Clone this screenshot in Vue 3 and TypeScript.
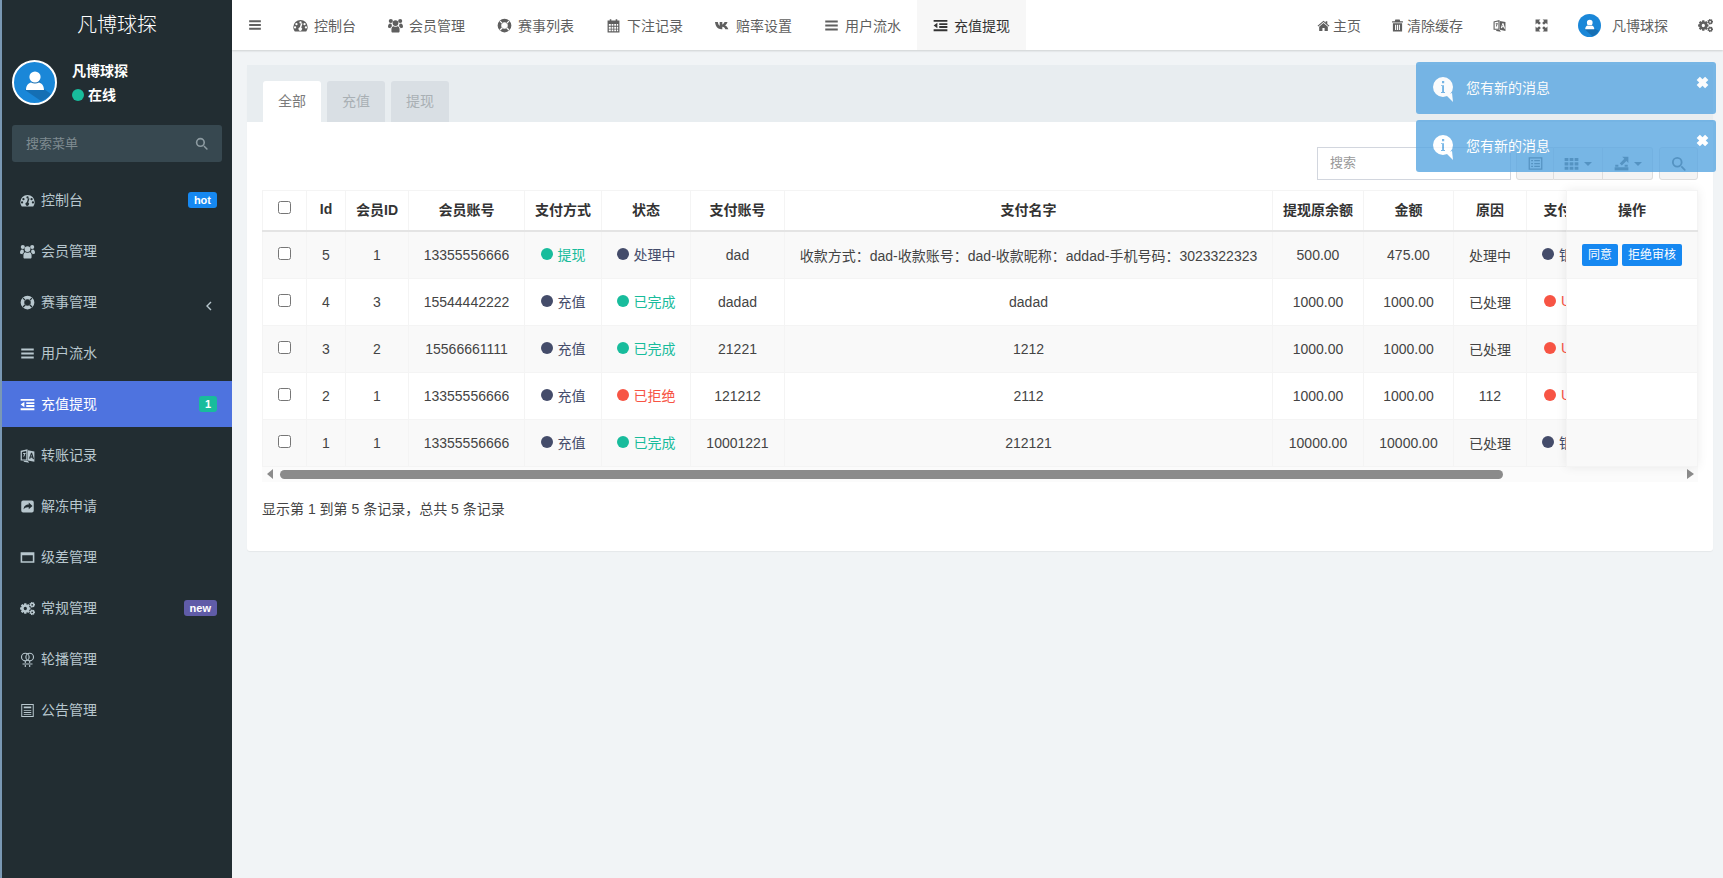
<template>
  <div class="layout">
    <!-- Sidebar -->
    <aside class="sidebar">
      <div class="logo">凡博球探</div>
      <div class="user-panel">
        <svg class="avatar" viewBox="0 0 45 45">
          <circle cx="22.5" cy="22.5" r="21.5" fill="#1a87d8" stroke="#fff" stroke-width="2" />
          <path d="M13 30 L25 16 L32 29 L39 34 A19.5 19.5 0 0 1 29 41 Z" fill="#135f9c" opacity="0.6" />
          <circle cx="23" cy="17" r="5.6" fill="#fff" />
          <path d="M14 30c0-5 3-7 5-7.5 2.4 1.4 5.6 1.4 8 0 2 .5 5 2.5 5 7.5z" fill="#fff" />
        </svg>
        <div class="user-info">
          <div class="user-name">凡博球探</div>
          <div class="user-status"><i class="dot green"></i>在线</div>
        </div>
      </div>
      <div class="side-search">
        <input type="text" placeholder="搜索菜单">
        <svg class="ico" viewBox="0 0 24 24"><path v-for="d in icons.search" :key="d" :d="d" /></svg>
      </div>
      <nav class="menu">
        <a v-for="item in menu" :key="item.label" class="menu-item" :class="{ active: item.active }">
          <svg class="ico" viewBox="0 0 24 24"><path v-for="d in icons[item.icon]" :key="d" :d="d" /></svg>
          <span class="menu-label">{{ item.label }}</span>
          <span v-if="item.badge" class="badge" :class="item.badgeClass">{{ item.badge }}</span>
          <svg v-if="item.arrow" class="chevron" viewBox="0 0 6 10"><path d="M5 1 1 5l4 4" /></svg>
        </a>
      </nav>
    </aside>

    <div class="main">
      <!-- Top bar -->
      <header class="topbar">
        <a class="toggle">
          <svg class="ico" viewBox="0 0 24 24"><path v-for="d in icons.bars" :key="d" :d="d" /></svg>
        </a>
        <a v-for="tab in navTabs" :key="tab.label" class="nav-tab" :class="{ active: tab.active }">
          <svg class="ico" viewBox="0 0 24 24"><path v-for="d in icons[tab.icon]" :key="d" :d="d" /></svg>
          {{ tab.label }}
        </a>
        <div class="top-right">
          <a class="top-link">
            <svg class="ico" viewBox="0 0 24 24"><path v-for="d in icons.home" :key="d" :d="d" /></svg>
            主页
          </a>
          <a class="top-link">
            <svg class="ico" viewBox="0 0 24 24"><path v-for="d in icons.trash" :key="d" :d="d" /></svg>
            清除缓存
          </a>
          <a class="top-link lang">
            <svg class="ico" viewBox="0 0 24 24"><path v-for="d in icons.language" :key="d" :d="d" /></svg>
          </a>
          <a class="top-link">
            <svg class="ico" viewBox="0 0 24 24"><path v-for="d in icons.expand" :key="d" :d="d" /></svg>
          </a>
          <a class="top-link user-link">
            <svg class="avatar-sm" viewBox="0 0 45 45">
              <circle cx="22.5" cy="22.5" r="22.5" fill="#1a87d8" />
              <path d="M13 30 L25 16 L32 29 L41 33 A22 22 0 0 1 29 44 Z" fill="#135f9c" opacity="0.6" />
              <circle cx="23" cy="17" r="5.6" fill="#fff" />
              <path d="M14 30c0-5 3-7 5-7.5 2.4 1.4 5.6 1.4 8 0 2 .5 5 2.5 5 7.5z" fill="#fff" />
            </svg>
            凡博球探
          </a>
          <a class="top-link last">
            <svg class="ico" viewBox="0 0 24 24"><path v-for="d in icons.cogs" :key="d" :d="d" /></svg>
          </a>
        </div>
      </header>

      <!-- Content -->
      <section class="content">
        <div class="panel">
          <div class="panel-heading">
            <a v-for="(tab, i) in panelTabs" :key="tab" class="panel-tab" :class="{ active: i === 0 }">{{ tab }}</a>
          </div>
          <div class="panel-body">
            <div class="toolbar">
              <input class="table-search" type="text" placeholder="搜索">
              <div class="btn-group">
                <button class="tool-btn first">
                  <svg class="ico" viewBox="0 0 24 24"><path v-for="d in icons.listAlt" :key="d" :d="d" /></svg>
                </button>
                <button class="tool-btn mid wide">
                  <svg class="ico" viewBox="0 0 24 24"><path v-for="d in icons.grid" :key="d" :d="d" /></svg>
                  <i class="caret"></i>
                </button>
                <button class="tool-btn last-btn wide">
                  <svg class="ico" viewBox="0 0 24 24"><path v-for="d in icons.exportTo" :key="d" :d="d" /></svg>
                  <i class="caret"></i>
                </button>
              </div>
              <button class="tool-btn single">
                <svg class="ico" viewBox="0 0 24 24"><path v-for="d in icons.search" :key="d" :d="d" /></svg>
              </button>
            </div>

            <div class="table-wrap">
              <div class="table-scroll">
                <table class="data-table" :style="{ width: tableWidth + 'px' }">
                  <colgroup>
                    <col v-for="(w, i) in colWidths" :key="i" :style="{ width: w + 'px' }">
                  </colgroup>
                  <thead>
                    <tr>
                      <th><input type="checkbox"></th>
                      <th v-for="(h, i) in headers" :key="i">{{ h }}</th>
                      <th></th>
                    </tr>
                  </thead>
                  <tbody>
                    <tr v-for="row in rows" :key="row.id">
                      <td><input type="checkbox"></td>
                      <td>{{ row.id }}</td>
                      <td>{{ row.memberId }}</td>
                      <td>{{ row.account }}</td>
                      <td><span class="tag" :class="row.type[1]"><i class="dot"></i>{{ row.type[0] }}</span></td>
                      <td><span class="tag" :class="row.status[1]"><i class="dot"></i>{{ row.status[0] }}</span></td>
                      <td>{{ row.payAccount }}</td>
                      <td>{{ row.payName }}</td>
                      <td>{{ row.balance }}</td>
                      <td>{{ row.amount }}</td>
                      <td>{{ row.reason }}</td>
                      <td><span class="tag" :class="row.payType[1]"><i class="dot"></i>{{ row.payType[0] }}</span></td>
                      <td></td>
                    </tr>
                  </tbody>
                </table>
              </div>

              <!-- fixed right column -->
              <div class="fixed-col">
                <table class="data-table">
                  <thead>
                    <tr><th>操作</th></tr>
                  </thead>
                  <tbody>
                    <tr v-for="(row, i) in rows" :key="row.id">
                      <td>
                        <template v-if="i === 0">
                          <button class="op-btn">同意</button>
                          <button class="op-btn">拒绝审核</button>
                        </template>
                      </td>
                    </tr>
                  </tbody>
                </table>
              </div>

              <div class="hscroll">
                <i class="arrow left"></i>
                <div class="track"><div class="thumb" :style="{ width: thumbWidth + '%' }"></div></div>
                <i class="arrow right"></i>
              </div>
            </div>

            <div class="pagination-info">显示第 1 到第 5 条记录，总共 5 条记录</div>
          </div>
        </div>
      </section>
    </div>

    <!-- Notifications -->
    <div class="toasts">
      <div v-for="n in 2" :key="n" class="toast">
        <svg class="toast-icon" viewBox="2 2 20 25">
          <path d="M12 2a10 10 0 1 1 0 20 10 10 0 0 1 0-20z M11 6v2.2h2.2V6z M10 10.2v.9h1.1v6h-1.1v.9h4v-.9h-1v-6.9z" />
          <path d="M15 20l7 7-1-9z" />
        </svg>
        <span class="toast-text">您有新的消息</span>
        <svg class="toast-close" viewBox="1 1 10 10"><path d="M1.5 4 4 1.5 6 3.5 8 1.5 10.5 4 8.5 6l2 2L8 10.5l-2-2-2 2L1.5 8l2-2z" /></svg>
      </div>
    </div>
  </div>
</template>

<script setup lang="ts">
import { computed } from 'vue'

// builds a cog outline with a round hole, used for the settings icons
const gear = (cx: number, cy: number, R: number, r: number, hole: number, teeth: number): string => {
  const pts: string[] = []
  const step = (Math.PI * 2) / teeth
  for (let i = 0; i < teeth; i++) {
    const a = i * step
    const list: [number, number][] = [
      [r, a - step * 0.5],
      [R, a - step * 0.25],
      [R, a + step * 0.25],
    ]
    for (const [rad, ang] of list) {
      pts.push(`${(cx + rad * Math.cos(ang)).toFixed(2)} ${(cy + rad * Math.sin(ang)).toFixed(2)}`)
    }
  }
  return `M${pts.join('L')}Z M${cx - hole} ${cy}a${hole} ${hole} 0 1 0 ${hole * 2} 0a${hole} ${hole} 0 1 0 ${-hole * 2} 0z`
}

const icons: Record<string, string[]> = {
  bars: ['M2 4h20v3.2H2zM2 10.4h20v3.2H2zM2 16.8h20V20H2z'],
  outdent: ['M1 3h22v3H1zM10 8.2h13v3H10zM10 12.8h13v3H10zM1 18h22v3H1zM7 7.5v9L1 12z'],
  dashboard: [
    'M12 3A11.5 11.5 0 0 0 .5 14.5c0 2.5.8 4.8 2.1 6.7.2.2.5.3.8.3h17.2c.3 0 .6-.1.8-.3 1.3-1.9 2.1-4.2 2.1-6.7A11.5 11.5 0 0 0 12 3z M12 5.2a1.8 1.8 0 1 1 0 3.6 1.8 1.8 0 0 1 0-3.6z M5.5 8a1.8 1.8 0 1 1 0 3.6 1.8 1.8 0 0 1 0-3.6z M18.5 8a1.8 1.8 0 1 1 0 3.6 1.8 1.8 0 0 1 0-3.6z M3.3 13.2a1.8 1.8 0 1 1 0 3.6 1.8 1.8 0 0 1 0-3.6z M20.7 13.2a1.8 1.8 0 1 1 0 3.6 1.8 1.8 0 0 1 0-3.6z M15.2 8.6l-2 6.6a2.8 2.8 0 1 1-2.3-.3l2.1-6.9z',
  ],
  users: [
    'M12 3.5a4.6 4.6 0 1 1 0 9.2 4.6 4.6 0 0 1 0-9.2z',
    'M4.5 1.5a3.3 3.3 0 1 1 0 6.6 3.3 3.3 0 0 1 0-6.6zM19.5 1.5a3.3 3.3 0 1 1 0 6.6 3.3 3.3 0 0 1 0-6.6z',
    'M0 14.5C0 11 1.2 8.8 3.5 8.8c1 0 1.6.5 2.3.7a6 6 0 0 0 .8 3.5c-1.4.6-2.3 1.7-2.8 3.2C1.7 16.2 0 15.8 0 14.5zM24 14.5c0-3.5-1.2-5.7-3.5-5.7-1 0-1.6.5-2.3.7a6 6 0 0 1-.8 3.5c1.4.6 2.3 1.7 2.8 3.2 2.1 0 3.8-.4 3.8-1.7z',
    'M5.5 18c0-3.2 1.6-5 3.6-5 .8.5 1.9.9 2.9.9s2.1-.4 2.9-.9c2 0 3.6 1.8 3.6 5v3c0 1.2-.8 2-1.8 2H7.3c-1 0-1.8-.8-1.8-2z',
  ],
  lifeRing: [
    'M12 1a11 11 0 1 1 0 22 11 11 0 0 1 0-22z M12 6.8a5.2 5.2 0 1 0 0 10.4 5.2 5.2 0 0 0 0-10.4z M4.2 5.6 7.8 9.2 9.2 7.8 5.6 4.2z M19.8 5.6 16.2 9.2 14.8 7.8 18.4 4.2z M4.2 18.4 7.8 14.8 9.2 16.2 5.6 19.8z M19.8 18.4 16.2 14.8 14.8 16.2 18.4 19.8z',
  ],
  calendar: [
    'M2.5 4H6V2h2.5v2h7V2H18v2h3.5v19h-19z M4.5 9.5v3h3.2v-3z M9 9.5v3h2.8v-3z M13.2 9.5v3H16v-3z M17.3 9.5v3h2.2v-3z M4.5 14v3h3.2v-3z M9 14v3h2.8v-3z M13.2 14v3H16v-3z M17.3 14v3h2.2v-3z M4.5 18.3v2.7h3.2v-2.7z M9 18.3v2.7h2.8v-2.7z M13.2 18.3v2.7H16v-2.7z M17.3 18.3v2.7h2.2v-2.7z',
  ],
  vk: ['M0 6.5h4.5c.5 3.2 1.6 5.2 3 6V6.5h4.2v4c1.5-.5 2.8-2 3.6-4H20c-.6 2.5-2.1 4.4-3.8 5.5 2.3 1 4 2.8 5.2 5.9h-4.9c-.8-2.2-2.2-3.6-4.8-4v4H10C5 17.9 1 14.5 0 6.5z'],
  language: [
    'M1 4.5 12 2v18L1 20z M3 6.2v12h7v-13.5z',
    'M5 8h4v1.5H8c-.2 2-.8 3.5-1.8 4.6l-1-.9c.7-.9 1.2-2.2 1.3-3.7H5z',
    'M12.5 3.5 23 5.5V22l-10.5-2z M17.6 7.5l-3.2 9.2 2 .3.6-2 2.8.4.6 2.2 2.1.3-3.2-10.2z M18 10.5l1 3-2 -.3z',
    'M6 20.5h6.5l2 3-8.5-1.5z',
  ],
  shareSquare: ['M5 2.5h14A3 3 0 0 1 22 5.5v13a3 3 0 0 1-3 3H5a3 3 0 0 1-3-3v-13a3 3 0 0 1 3-3z M14 5.5v3.2c-4.8 0-8 2.3-8.2 8 1.6-2.8 4.4-3.8 8.2-3.4v3.2l6-5.5z'],
  windowMax: ['M1 3.5h22v17H1z M3.5 8.5v9.5h17V8.5z'],
  cogs: [gear(8.5, 12, 8.5, 6.2, 2.6, 8), gear(19.5, 6, 4.6, 3.3, 1.4, 7), gear(19.5, 18, 4.6, 3.3, 1.4, 7)],
  venus: [
    'M8.5 1a7 7 0 1 1 0 14 7 7 0 0 1 0-14z M8.5 2.8a5.2 5.2 0 1 0 0 10.4 5.2 5.2 0 0 0 0-10.4z',
    'M15.5 1a7 7 0 1 1 0 14 7 7 0 0 1 0-14z M15.5 2.8a5.2 5.2 0 1 0 0 10.4 5.2 5.2 0 0 0 0-10.4z',
    'M7.6 14.5h1.8V24H7.6zM14.6 14.5h1.8V24h-1.8zM4 18.3h16v1.8H4z',
  ],
  paper: ['M2 1.5h20v21H2z M3.6 3.1v17.8h16.8V3.1z', 'M6 5.5h12v3H6zM6 11h12v1.4H6zM6 14.5h12v1.4H6zM6 18h12v1H6z'],
  home: ['M12 3 1 12.5l1.4 1.5L12 5.6l9.6 8.4 1.4-1.5L19 9V4h-3v2.4z', 'M12 7.5 4 14.5V22h6v-5.5h4V22h6v-7.5z'],
  trash: ['M8 1h8l1 3H22v2.5H2V4h5z', 'M3.5 8h17v15h-17z M7.5 10.5v10h2v-10z M11 10.5v10h2v-10z M14.5 10.5v10h2v-10z'],
  expand: [
    'M1 1h9L7.2 3.8 10.8 7.5 7.5 10.8 3.8 7.2 1 10z',
    'M23 1v9l-2.8-2.8-3.7 3.6-3.3-3.3 3.6-3.7L14 1z',
    'M1 23v-9l2.8 2.8 3.7-3.6 3.3 3.3-3.6 3.7L10 23z',
    'M23 23h-9l2.8-2.8-3.6-3.7 3.3-3.3 3.7 3.6L23 14z',
  ],
  search: ['M10 1.5a8.5 8.5 0 1 1 0 17 8.5 8.5 0 0 1 0-17z M10 4.5a5.5 5.5 0 1 0 0 11 5.5 5.5 0 0 0 0-11z', 'M15.5 17.5l2-2 5.5 5.5a1.4 1.4 0 0 1-2 2z'],
  listAlt: ['M1 2h22v20H1z M3 4v16h18V4z', 'M5 6.5h3v2H5zM10 6.5h9v2h-9zM5 11h3v2H5zM10 11h9v2h-9zM5 15.5h3v2H5zM10 15.5h9v2h-9z'],
  grid: ['M1 3h6v5H1zM9 3h6v5H9zM17 3h6v5h-6zM1 10h6v5H1zM9 10h6v5H9zM17 10h6v5h-6zM1 17h6v5H1zM9 17h6v5H9zM17 17h6v5h-6z'],
  exportTo: ['M1 18h22v5H1z', 'M2 14h5v3H2zM17 14h5v3h-5z', 'M13 1h10v10l-3.2-3.2-7.3 7.3-3.3-3.3 7.3-7.3z'],
}

const menu = [
  { label: '控制台', icon: 'dashboard', badge: 'hot', badgeClass: 'blue' },
  { label: '会员管理', icon: 'users' },
  { label: '赛事管理', icon: 'lifeRing', arrow: true },
  { label: '用户流水', icon: 'bars' },
  { label: '充值提现', icon: 'outdent', badge: '1', badgeClass: 'teal', active: true },
  { label: '转账记录', icon: 'language' },
  { label: '解冻申请', icon: 'shareSquare' },
  { label: '级差管理', icon: 'windowMax' },
  { label: '常规管理', icon: 'cogs', badge: 'new', badgeClass: 'purple' },
  { label: '轮播管理', icon: 'venus' },
  { label: '公告管理', icon: 'paper' },
]

const navTabs = [
  { label: '控制台', icon: 'dashboard' },
  { label: '会员管理', icon: 'users' },
  { label: '赛事列表', icon: 'lifeRing' },
  { label: '下注记录', icon: 'calendar' },
  { label: '赔率设置', icon: 'vk' },
  { label: '用户流水', icon: 'bars' },
  { label: '充值提现', icon: 'outdent', active: true },
]

const panelTabs = ['全部', '充值', '提现']

const headers = ['Id', '会员ID', '会员账号', '支付方式', '状态', '支付账号', '支付名字', '提现原余额', '金额', '原因', '支付方式']

const colWidths = [44, 39, 63, 116, 77, 89, 94, 488, 91, 90, 73, 90, 290]
const tableWidth = computed(() => colWidths.reduce((a, b) => a + b, 0))
const thumbWidth = computed(() => (1436 / tableWidth.value) * 100)

const recharge: [string, string] = ['充值', 'navy']
const done: [string, string] = ['已完成', 'green']
const usdt: [string, string] = ['USDT', 'red']
const bank: [string, string] = ['银行卡', 'navy']

const rows = [
  {
    id: 5, memberId: 1, account: '13355556666', type: ['提现', 'green'], status: ['处理中', 'navy'], payAccount: 'dad',
    payName: '收款方式：dad-收款账号：dad-收款昵称：addad-手机号码：3023322323',
    balance: '500.00', amount: '475.00', reason: '处理中', payType: bank,
  },
  {
    id: 4, memberId: 3, account: '15544442222', type: recharge, status: done, payAccount: 'dadad',
    payName: 'dadad', balance: '1000.00', amount: '1000.00', reason: '已处理', payType: usdt,
  },
  {
    id: 3, memberId: 2, account: '15566661111', type: recharge, status: done, payAccount: '21221',
    payName: '1212', balance: '1000.00', amount: '1000.00', reason: '已处理', payType: usdt,
  },
  {
    id: 2, memberId: 1, account: '13355556666', type: recharge, status: ['已拒绝', 'red'], payAccount: '121212',
    payName: '2112', balance: '1000.00', amount: '1000.00', reason: '112', payType: usdt,
  },
  {
    id: 1, memberId: 1, account: '13355556666', type: recharge, status: done, payAccount: '10001221',
    payName: '212121', balance: '10000.00', amount: '10000.00', reason: '已处理', payType: bank,
  },
]
</script>

<style>
html,
body {
  margin: 0;
  background: #f1f4f6;
}
</style>

<style scoped>
.layout {
  position: relative;
  display: flex;
  height: 878px;
  overflow: hidden;
  font-family: "Liberation Sans", "Noto Sans CJK SC", sans-serif;
  font-size: 14px;
  color: #444;
}

.ico {
  width: 15px;
  height: 15px;
  flex: none;
  fill: currentColor;
}

.ico path {
  fill-rule: evenodd;
}

/* sidebar */
.sidebar {
  flex: none;
  width: 230px;
  border-left: 2px solid #7a98b4;
  background: #222d32;
  color: #b8c7ce;
}

.logo {
  height: 50px;
  line-height: 50px;
  text-align: center;
  font-size: 20px;
  font-weight: 300;
  color: #fff;
}

.user-panel {
  display: flex;
  gap: 15px;
  padding: 10px 10px 0;
  height: 45px;
}

.avatar {
  width: 45px;
  height: 45px;
  flex: none;
}

.user-info {
  color: #fff;
  font-weight: 700;
  line-height: 20px;
}

.user-name {
  margin-top: 1px;
  margin-bottom: 4px;
}

.user-status {
  display: flex;
  align-items: center;
  gap: 4px;
}

.dot {
  display: inline-block;
  flex: none;
  width: 12px;
  height: 12px;
  border-radius: 50%;
  background: currentColor;
}

.dot.green {
  background: #18bc9c;
}

.side-search {
  display: flex;
  align-items: center;
  height: 37px;
  margin: 20px 10px 0;
  padding: 0 14px;
  border-radius: 3px;
  background: #374850;
  color: #8d9ba1;
}

.side-search input {
  flex: 1;
  min-width: 0;
  padding: 0;
  border: 0;
  outline: 0;
  background: transparent;
  font: inherit;
  font-size: 13px;
  color: #ccc;
}

.side-search input::placeholder {
  color: #7f8b90;
}

.side-search .ico {
  width: 13px;
  height: 13px;
}

.menu {
  margin-top: 15px;
}

.menu-item {
  display: flex;
  align-items: center;
  height: 46px;
  margin-bottom: 5px;
  padding: 0 15px 0 18px;
  gap: 6px;
  cursor: pointer;
}

.menu-item.active {
  background: #4e73df;
  color: #fff;
}

.menu-label {
  flex: 1;
  padding-bottom: 2px;
}

.badge {
  height: 16px;
  padding: 0 6px;
  border-radius: 3px;
  font-size: 11px;
  font-weight: 700;
  line-height: 16px;
  color: #fff;
}

.badge.blue {
  background: #1688f1;
}

.badge.teal {
  background: #18bc9c;
}

.badge.purple {
  background: #605ca8;
}

.chevron {
  width: 6px;
  height: 10px;
  margin: 8px 5px 0 0;
  fill: none;
  stroke: currentColor;
  stroke-width: 1.4;
}

/* top bar */
.main {
  flex: 1;
  min-width: 0;
  display: flex;
  flex-direction: column;
}

.topbar {
  display: flex;
  flex: none;
  height: 50px;
  background: #fff;
  box-shadow: 0 1px 2px rgba(0, 0, 0, 0.15);
  color: #5f5f5f;
}

.toggle {
  display: flex;
  align-items: center;
  justify-content: center;
  width: 45px;
}

.toggle .ico {
  width: 14px;
  height: 14px;
}

.nav-tab {
  display: flex;
  align-items: center;
  gap: 6px;
  padding: 0 16px;
  cursor: pointer;
}

.nav-tab.active {
  background: #f7f7f7;
  color: #333;
}

.top-right {
  display: flex;
  margin-left: auto;
}

.top-link {
  display: flex;
  align-items: center;
  gap: 3px;
  padding: 0 15px;
  cursor: pointer;
}

.top-link .ico {
  width: 13px;
  height: 13px;
}

.top-link.lang {
  padding-right: 14px;
}

.top-link.last {
  padding-right: 10px;
}

.top-link.last .ico {
  width: 15px;
  height: 15px;
}

.user-link {
  gap: 11px;
}

.avatar-sm {
  width: 23px;
  height: 23px;
}

/* panel */
.content {
  flex: 1;
  padding: 15px 10px 0 15px;
}

.panel {
  border-radius: 3px;
  background: #fff;
  box-shadow: 0 1px 1px rgba(0, 0, 0, 0.05);
}

.panel-heading {
  display: flex;
  gap: 6px;
  height: 41px;
  padding: 16px 16px 0;
  background: #e8edf0;
}

.panel-tab {
  width: 58px;
  line-height: 41px;
  text-align: center;
  border-radius: 3px 3px 0 0;
  background: #d9dfe4;
  color: #a9b0b4;
  cursor: pointer;
}

.panel-tab.active {
  background: #fff;
  color: #7b7b7b;
}

.panel-body {
  padding: 25px 15px 32px;
}

.toolbar {
  display: flex;
  justify-content: flex-end;
  gap: 5px;
  height: 33px;
  margin-bottom: 10px;
}

.table-search {
  box-sizing: border-box;
  width: 194px;
  padding: 0 12px 2px;
  border: 1px solid #d2d6de;
  outline: 0;
  font: inherit;
  font-size: 13px;
}

.table-search::placeholder {
  color: #999;
}

.btn-group {
  display: flex;
}

.tool-btn {
  display: flex;
  align-items: center;
  justify-content: center;
  gap: 5px;
  box-sizing: border-box;
  height: 33px;
  padding: 0;
  border: 1px solid #ddd;
  background: #f4f4f4;
  color: #444;
  cursor: pointer;
}

.tool-btn .ico {
  width: 15px;
  height: 15px;
}

.tool-btn.first {
  width: 38px;
  border-radius: 3px 0 0 3px;
}

.tool-btn.mid {
  width: 49px;
  border-left: 0;
}

.tool-btn.last-btn {
  width: 50px;
  border-left: 0;
  border-radius: 0 3px 3px 0;
}

.tool-btn.single {
  width: 39px;
  margin-left: 1px;
  border-radius: 3px;
}

.caret {
  width: 0;
  height: 0;
  border-top: 4px solid currentColor;
  border-left: 4px solid transparent;
  border-right: 4px solid transparent;
}

/* table */
.table-wrap {
  position: relative;
}

.table-scroll {
  overflow: hidden;
}

.data-table {
  border-collapse: collapse;
  table-layout: fixed;
  text-align: center;
}

.data-table th,
.data-table td {
  padding: 0;
  border: 1px solid #f4f4f4;
  white-space: nowrap;
  overflow: hidden;
}

.data-table th {
  box-sizing: border-box;
  height: 40px;
  padding-bottom: 2px;
  border-bottom: 2px solid #e4e4e4;
  font-weight: 700;
  color: #333;
  background: #fff;
}

.data-table td {
  height: 46px;
}

.data-table tbody tr:nth-child(odd) td {
  background: #f9f9f9;
}

.data-table input[type="checkbox"] {
  display: block;
  margin: -3px auto 0;
  width: 13px;
  height: 13px;
}

.tag {
  display: inline-flex;
  align-items: center;
  gap: 5px;
  margin-bottom: 2px;
  vertical-align: middle;
}

.tag.green {
  color: #18bc9c;
}

.tag.navy {
  color: #444c6a;
}

.tag.red {
  color: #f75444;
}

.fixed-col {
  position: absolute;
  top: 0;
  right: 0;
  width: 132px;
  background: #fff;
  box-shadow: 0 0 10px rgba(0, 0, 0, 0.08);
}

.fixed-col .data-table {
  width: 100%;
}

.op-btn {
  height: 22px;
  margin: 0 2px;
  padding: 0 6px;
  border: 0;
  border-radius: 2px;
  background: #1688f1;
  font: inherit;
  font-size: 12px;
  line-height: 22px;
  color: #fff;
  cursor: pointer;
}

.hscroll {
  display: flex;
  align-items: center;
  height: 15px;
  background: #fbfbfb;
}

.track {
  flex: 1;
}

.thumb {
  height: 9px;
  border-radius: 5px;
  background: #8b8b8b;
}

.arrow {
  flex: none;
  width: 18px;
  height: 0;
}

.arrow::before {
  content: "";
  display: block;
  width: 0;
  height: 0;
  margin: -5px 0 0 5px;
  border-top: 5px solid transparent;
  border-bottom: 5px solid transparent;
}

.arrow.left::before {
  border-right: 6px solid #8b8b8b;
}

.arrow.right::before {
  margin-left: 7px;
  border-left: 7px solid #8b8b8b;
}

.pagination-info {
  margin-top: 17px;
  line-height: 20px;
  color: #444;
}

/* notifications */
.toasts {
  position: absolute;
  top: 62px;
  right: 7px;
  display: flex;
  flex-direction: column;
  gap: 6px;
}

.toast {
  position: relative;
  display: flex;
  align-items: center;
  gap: 13px;
  box-sizing: border-box;
  width: 300px;
  height: 52px;
  padding: 0 17px;
  border-radius: 3px;
  background: #59a7e2;
  opacity: 0.8;
  color: #fff;
}

.toast-text {
  padding-bottom: 2px;
}

.toast-icon {
  width: 20px;
  height: 25px;
  margin-top: 3px;
  fill: #fff;
}

.toast-icon path {
  fill-rule: evenodd;
}

.toast-close {
  position: absolute;
  top: 14px;
  right: 7px;
  width: 13px;
  height: 13px;
  fill: #fff;
}
</style>
